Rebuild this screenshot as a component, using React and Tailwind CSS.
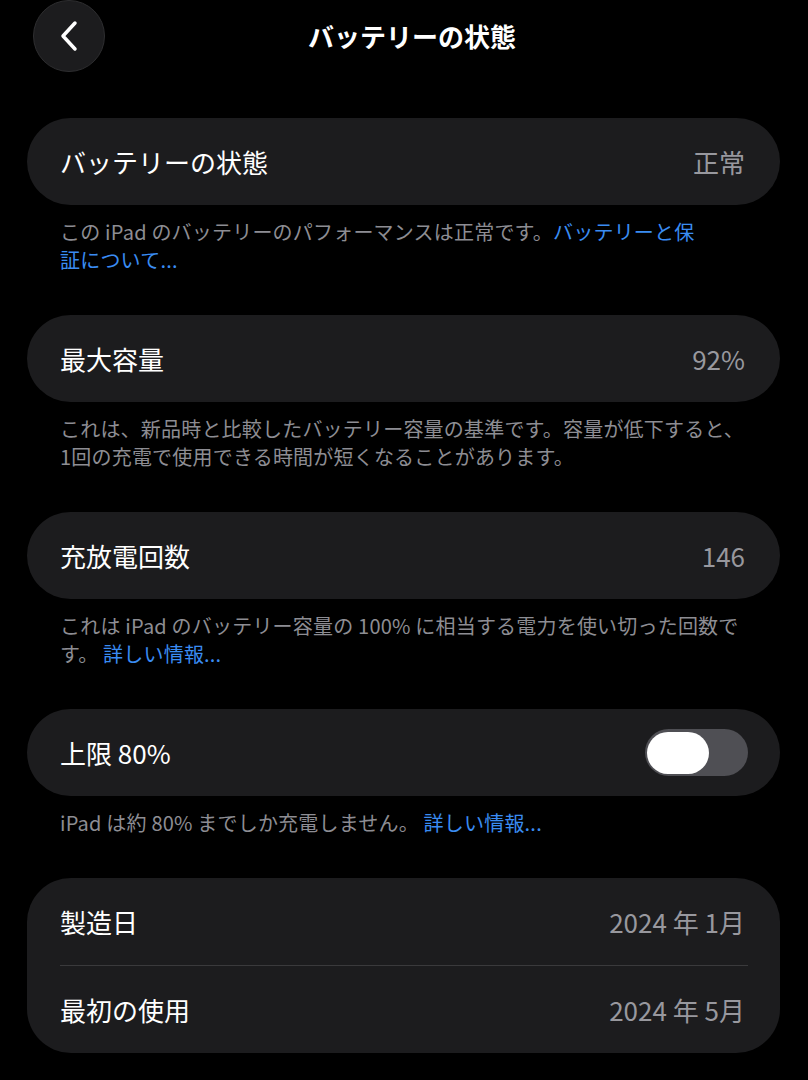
import React from "react";

const font = { fontFamily: '"Noto Sans CJK JP", "Noto Sans", sans-serif' };

function Row({ label, value, children }) {
    return (
        <div className="flex items-center justify-between h-[87px] pl-[33px] pr-[35px]">
            <span className="text-[26px] text-white">{label}</span>
            {children ? children : <span className="text-[26px] text-[#98989e]">{value}</span>}
        </div>
    );
}

function Card({ children }) {
    return <div className="mt-[41px] ml-[27px] mr-[28px] bg-[#1c1c1e] rounded-[44px]">{children}</div>;
}

function Footer({ children }) {
    return (
        <p className="mt-[13px] ml-[60px] mr-[30px] text-[20px] tracking-[0.2px] leading-[28px] text-[#8d8d93] whitespace-nowrap">
            {children}
        </p>
    );
}

const Link = ({ children }) => <span className="text-[#3a8cf2]">{children}</span>;

export default function App() {
    return (
        <div className="min-h-[1080px] w-[808px] bg-black overflow-hidden" style={font}>
            {/* header */}
            <div className="relative flex items-center justify-center h-[72px] pl-[16px]">
                <button className="absolute left-[33px] top-0 w-[72px] h-[72px] rounded-full bg-[#1c1c1e] border border-[#2e2e30] flex items-center justify-center">
                    <svg width="22" height="34" viewBox="0 0 22 34" fill="none">
                        <path d="M17 4L5 17l12 13" stroke="white" strokeWidth="3.5" strokeLinecap="round" strokeLinejoin="round" />
                    </svg>
                </button>
                <h1 className="text-[26px] font-bold text-white -mt-[2px]">バッテリーの状態</h1>
            </div>

            <div className="pt-[5px]">
                <Card>
                    <Row label="バッテリーの状態" value="正常" />
                </Card>
                <Footer>
                    この iPad のバッテリーのパフォーマンスは正常です。<Link>バッテリーと保</Link>
                    <br />
                    <Link>証について...</Link>
                </Footer>

                <Card>
                    <Row label="最大容量" value="92%" />
                </Card>
                <Footer>
                    これは、新品時と比較したバッテリー容量の基準です。容量が低下すると、
                    <br />
                    1回の充電で使用できる時間が短くなることがあります。
                </Footer>

                <Card>
                    <Row label="充放電回数" value="146" />
                </Card>
                <Footer>
                    これは iPad のバッテリー容量の 100% に相当する電力を使い切った回数で
                    <br />
                    す。 <Link>詳しい情報...</Link>
                </Footer>

                <Card>
                    <Row label="上限 80%">
                        <div className="w-[103px] h-[47px] -mr-[3px] rounded-full bg-[#4f4f54] flex items-center pl-[2px]">
                            <div className="w-[62px] h-[42px] rounded-full bg-white" />
                        </div>
                    </Row>
                </Card>
                <Footer>
                    iPad は約 80% までしか充電しません。 <Link>詳しい情報...</Link>
                </Footer>

                <Card>
                    <Row label="製造日" value="2024 年 1月" />
                    <div className="ml-[33px] mr-[32px] h-px bg-[#3a3a3c]" />
                    <Row label="最初の使用" value="2024 年 5月" />
                </Card>
            </div>
        </div>
    );
}
